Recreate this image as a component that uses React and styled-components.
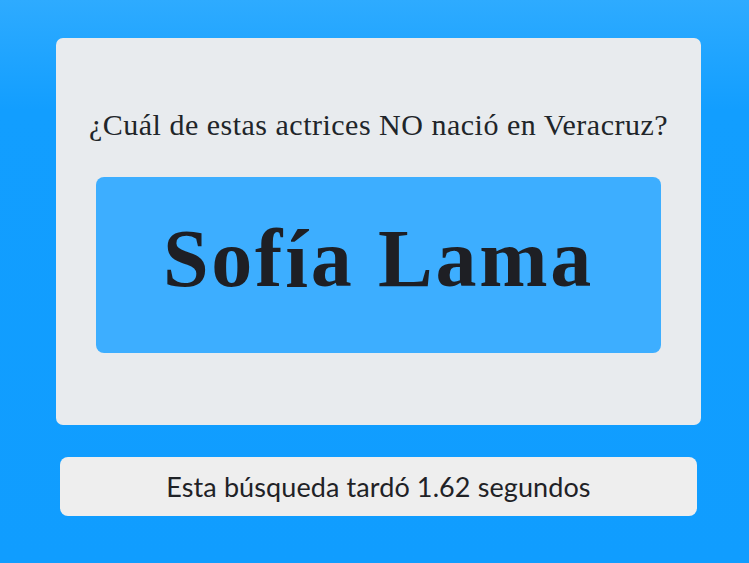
import React from "react";
import styled, { createGlobalStyle } from "styled-components";

const Global = createGlobalStyle`
  html, body { margin: 0; padding: 0; }
  body {
    background: linear-gradient(180deg, #2eabff 0px, #129eff 110px, #109dff 563px);
    background-color: #109dff;
    min-height: 563px;
  }
`;

const Page = styled.div`
  width: 749px;
  min-height: 563px;
  box-sizing: border-box;
  padding: 38px 48px 0 56px;
  display: flex;
  flex-direction: column;
  align-items: flex-start;
`;

const Card = styled.div`
  width: 645px;
  height: 387px;
  box-sizing: border-box;
  background: #e8ebee;
  border-radius: 7px;
  padding: 70px 10px 0;
  display: flex;
  flex-direction: column;
  align-items: center;
`;

const Question = styled.h2`
  margin: 0;
  font-family: "Liberation Serif", serif;
  font-weight: 400;
  font-size: 30px;
  letter-spacing: 0.5px;
  line-height: 34px;
  color: #212529;
  text-align: center;
  white-space: nowrap;
`;

const Answer = styled.div`
  margin-top: 35px;
  width: 565px;
  height: 176px;
  background: #3daeff;
  border-radius: 8px;
  display: flex;
  align-items: center;
  justify-content: center;
  font-family: "Liberation Serif", serif;
  font-weight: 700;
  font-size: 82px;
  letter-spacing: 2.8px;
  color: #1e1f24;
  padding-bottom: 12px;
  box-sizing: border-box;
`;

const Timer = styled.div`
  margin: 32px 0 0 4px;
  width: 637px;
  height: 59px;
  background: #eeeeee;
  border-radius: 8px;
  display: flex;
  align-items: center;
  justify-content: center;
  font-family: "Lato", sans-serif;
  font-size: 27px;
  letter-spacing: 0.1px;
  color: #1f2226;
`;

export default function App() {
  return (
    <>
      <Global />
      <Page>
        <Card>
          <Question>¿Cuál de estas actrices NO nació en Veracruz?</Question>
          <Answer>Sofía Lama</Answer>
        </Card>
        <Timer>Esta búsqueda tardó 1.62 segundos</Timer>
      </Page>
    </>
  );
}
